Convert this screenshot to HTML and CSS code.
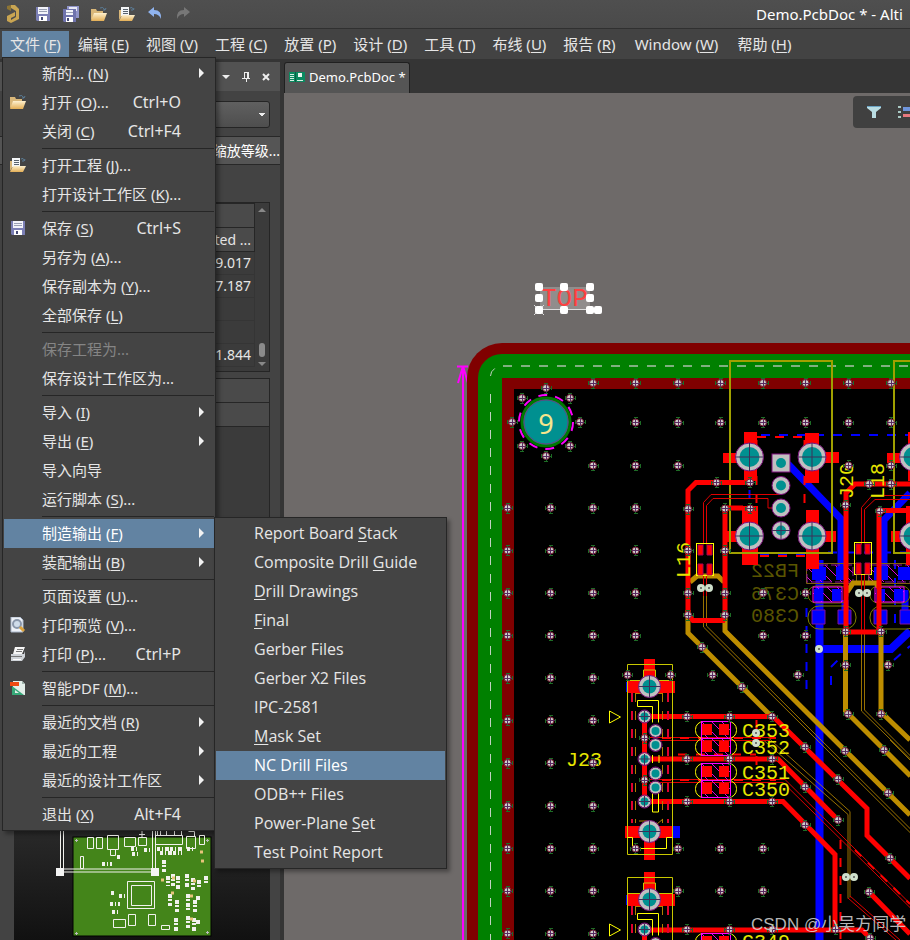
FILE: index.html
```html
<!DOCTYPE html>
<html lang="zh-CN">
<head>
<meta charset="utf-8">
<title>Demo.PcbDoc</title>
<link rel="stylesheet" href="styles.css">
</head>
<body>
<svg class="defs" width="0" height="0" aria-hidden="true">
  <defs>
    <linearGradient id="gold" x1="0" y1="0" x2="0" y2="1"><stop offset="0" stop-color="#fdf0cf"/><stop offset="1" stop-color="#e3ae55"/></linearGradient>
    <symbol id="i-save" viewBox="0 0 16 16">
      <path d="M1 1h14v14H2l-1-1z" fill="#7b7fb5"/><path d="M3 1h10v7H3z" fill="#f2f3fa"/><path d="M4 3.500h8M4 5.500h8" stroke="#9aa0b4"/><path d="M4 10h8v5H4z" fill="#fff"/><path d="M6 11h2v3H6z" fill="#454a78"/>
    </symbol>
    <symbol id="i-saveall" viewBox="0 0 16 16">
      <path d="M4 0h12v12H4z" fill="#9094c8"/><path d="M6 1h8v4H6z" fill="#e8e9f6"/><path d="M0 3h13v13H1l-1-1z" fill="#6f73ad"/><path d="M3 4h7v5H3z" fill="#f2f3fa"/><path d="M3 6.500h7" stroke="#9aa0b4"/><path d="M3 11h7v5H3z" fill="#fff"/><path d="M4 12h2v3H4z" fill="#454a78"/>
    </symbol>
    <symbol id="i-open" viewBox="0 0 16 16">
      <path d="M0 14V3h5l1 2h6v3" fill="#d9b779"/><path d="M3 7h13l-3 8H0z" fill="url(#gold)"/><path d="M9 2q3-2 5 2M12 4l2 0 1-2" fill="none" stroke="#5b7c96"/>
    </symbol>
    <symbol id="i-openproj" viewBox="0 0 16 16">
      <path d="M0 14V4h3v5" fill="#d9b779"/><path d="M2 1h8v9H2z" fill="#f4f6f8"/><path d="M4 3.500h5M4 5.500h5M4 7.500h5" stroke="#59636e"/><path d="M3 9h13l-3 6H0z" fill="url(#gold)"/><path d="M11 2q2-2 4 2M12 4h2l1-2" fill="none" stroke="#5b7c96"/>
    </symbol>
    <symbol id="i-undo" viewBox="0 0 16 16"><path d="M1 6l6-5v3q8 0 7 9-2-5-7-5v3z" fill="#8fb3ee"/></symbol>
    <symbol id="i-redo" viewBox="0 0 16 16"><path d="M15 6L9 1v3Q1 4 2 13q2-5 7-5v3z" fill="#777"/></symbol>
    <symbol id="i-preview" viewBox="0 0 16 16">
      <path d="M1 0h9l3 3v12H1z" fill="#eef2f8" stroke="#a9b6c8"/><circle cx="7" cy="7" r="4" fill="#cfdcea" stroke="#8a97ab" stroke-width="2"/><path d="M10 10l4 4" stroke="#dba23c" stroke-width="3"/>
    </symbol>
    <symbol id="i-print" viewBox="0 0 16 16">
      <path d="M5 1h10l-3 7H3z" fill="#f7f7f7"/><path d="M7 3.500h6M6 5.500h6" stroke="#777"/><path d="M1 8h13l1-3v6l-3 4H1z" fill="#cfd3d8"/><path d="M1 10.500h11" stroke="#777"/><path d="M3 13.500h8" stroke="#fff"/>
    </symbol>
    <symbol id="i-pdf" viewBox="0 0 16 16">
      <path d="M3 1h9l3 3v11H3z" fill="#e3eee9"/><path d="M12 1v3h3" fill="#9fb3ab"/><path d="M0 2h9v4H0z" fill="#ee4a12"/><path d="M2 6l12 9H2z" fill="#36a878"/><path d="M5 10l4 3H5z" fill="#e3eee9"/>
    </symbol>
    <symbol id="i-arrow" viewBox="0 0 6 10"><path d="M0 0l5 5-5 5z" fill="#f2f2f2"/></symbol>
  </defs>
</svg>

<header class="titlebar">
  <svg class="logo" viewBox="0 0 14 20"><path d="M5 1l4 0 4 4v10l-8 4-4-2v-5l8-4v4l-4 2v2l5-3V7L5 4z" fill="#c9a552"/><path d="M5 1v6L1 5V2z" fill="#8d7434"/></svg>
  <button class="tool" aria-label="保存"><svg><use href="#i-save"/></svg></button>
  <button class="tool" aria-label="全部保存"><svg><use href="#i-saveall"/></svg></button>
  <button class="tool" aria-label="打开"><svg><use href="#i-open"/></svg></button>
  <button class="tool" aria-label="打开工程"><svg><use href="#i-openproj"/></svg></button>
  <button class="tool" aria-label="撤销"><svg><use href="#i-undo"/></svg></button>
  <button class="tool" aria-label="重做"><svg><use href="#i-redo"/></svg></button>
  <div class="caption">Demo.PcbDoc * - Alti</div>
</header>

<nav class="menubar">
  <button class="active">文件 (<u>F</u>)</button><button>编辑 (<u>E</u>)</button><button>视图 (<u>V</u>)</button><button>工程 (<u>C</u>)</button><button>放置 (<u>P</u>)</button><button>设计 (<u>D</u>)</button><button>工具 (<u>T</u>)</button><button>布线 (<u>U</u>)</button><button>报告 (<u>R</u>)</button><button class="latin">Window (<u>W</u>)</button><button>帮助 (<u>H</u>)</button>
</nav>

<div class="workspace">
  <aside class="panel">
    <div class="panel-head">
      <button aria-label="菜单"><svg viewBox="0 0 10 10"><path d="M1 3h8L5 7z" fill="#eee"/></svg></button>
      <button aria-label="固定"><svg viewBox="0 0 10 10"><path d="M3.500 0v6M3 .500h5M1 6.500h8M5.500 6v4" fill="none" stroke="#eee"/><path d="M6 0h2v6H6z" fill="#eee"/></svg></button>
      <button aria-label="关闭"><svg viewBox="0 0 10 10"><path d="M2 2l6 6M8 2L2 8" stroke="#eee" stroke-width="2"/></svg></button>
    </div>
    <div class="combo-row"><select class="combo" aria-label="对象"><option></option></select></div>
    <div class="zoom-row"><button>缩放等级...</button></div>
    <div class="grid-box">
      <table class="nets">
        <tr><th></th></tr>
        <tr><th>ted ...</th></tr>
        <tr><td>9.017</td></tr>
        <tr><td>7.187</td></tr>
        <tr><td></td></tr>
        <tr><td></td></tr>
        <tr><td>1.844</td></tr>
      </table>
      <div class="scroll">
        <svg viewBox="0 0 8 5"><path d="M0 5l4-4 4 4z" fill="#888"/></svg>
        <span class="thumb"></span>
        <svg viewBox="0 0 8 5"><path d="M0 0l4 4 4-4z" fill="#888"/></svg>
      </div>
    </div>
    <div class="grid-box second"><div class="bar"></div><div class="bar"></div></div>
    <div class="preview">
      <svg viewBox="14 700 256 240" preserveAspectRatio="xMinYMax slice">
        <rect x="73" y="837" width="138" height="99" fill="#44851a" stroke="#000"/>
        <g fill="none" stroke="#f2f2ee">
          <path d="M87.500 837.500h6v11h-6zM96.500 837.500h6v11h-6zM107.500 835.500h11v14h-11zM124.500 837.500h11v9h-11zM138.500 837.500h8v8h-8zM139 834.500h6M142 831v6M155.500 835.500h27v9h-27zM186.500 836.500h9v12h-9zM199.500 835.500h5v9h-5zM157.500 831v5M160.500 831v5M166.500 831v5M174.500 831v5M181.500 831v5M188.500 831.500h6v5"/>
          <path d="M127.500 881.500h27v27h-27zM131.500 885.500h20v20h-20zM128.500 914.500h7v11h-7zM148.500 914.500h7v11h-7zM113.500 919.500h12v8h-12zM161.500 925.500h8v4h-8zM110.500 849.500h5v6h-5zM80.500 856.500h3v12h-3z"/>
          <path d="M60.500 831v41h95v-41M63.500 831v38h89v-38"/>
        </g>
        <g fill="none" stroke="#f2f2ee" stroke-width="4" stroke-dasharray="3 2 1 2 4 1">
          <path d="M131 849h8M132 854h8M144 850h6M157 849h26M160 853h22M187 849h8M117 857h4M102 864h10M111 893h5M119 896h8M110 904h10M112 912h6"/>
          <path d="M164 860v12M168 876v10M173 874v12M178 876v14M187 874v14M193 878v12M170 894v12M177 900v12M188 894v16M195 900v12M176 918v14M188 916v12M194 918v14M198 920v4M198 896v4M199 880v8M206 876v8" stroke-dasharray="4 1 2 2"/>
        </g>
        <path d="M172 878h3M193 881h3M171 893h3M190 896h3M200 852h3M201 861h3M190 919h3M161 880h3" stroke="#e8c47a" stroke-width="3"/>
        <path d="M56 868h8v8h-8zM151 868h8v8h-8z" fill="#f4f4f4"/>
        <path d="M75 840.500h3M76.500 839v3M206 840.500h3M207.500 839v3M75 933.500h3M76.500 932v3M206 932.500h3M207.500 931v3" stroke="#bbb"/>
      </svg>
    </div>
  </aside>

  <main class="doc">
    <div class="tabs">
      <button class="tab"><svg viewBox="0 0 16 12"><path d="M0 1h16v10H0z" fill="#0b8a60"/><path d="M1 3.500h4M1 5.500h4M1 7.500h4M1 9.500h4M8 9.500h6" stroke="#d6efe4"/><path d="M9 2h4v4H9z" fill="#e9f6f0"/><path d="M6.500 1v10" stroke="#0a5f44"/></svg>Demo.PcbDoc *</button>
    </div>
    <div class="canvas">
      <svg class="board" viewBox="284 93 626 847" preserveAspectRatio="xMinYMin slice">
        <defs>
          <marker id="via" markerUnits="userSpaceOnUse" markerWidth="12" markerHeight="12" refX="6" refY="6" viewBox="0 0 12 12">
            <path d="M1 6h10M6 1v10M4 1h4M4 11h4M1 4v4M11 4v4" stroke="#1d6b25" fill="none" shape-rendering="crispEdges"/>
            <circle cx="6" cy="6" r="3.500" fill="#ccc" stroke="#7a2030"/><path d="M2 6h8M6 2v8" stroke="#5a2a60" shape-rendering="crispEdges"/>
          </marker>
          <marker id="hole" markerUnits="userSpaceOnUse" markerWidth="8" markerHeight="8" refX="4" refY="4" viewBox="0 0 8 8"><circle cx="4" cy="4" r="2.500" fill="#555" stroke="#cfe0cc" stroke-width="3"/></marker>
          <pattern id="hatch" width="10" height="10" patternUnits="userSpaceOnUse"><path d="M0 0l10 10" stroke="#e000e0"/></pattern>
          <g id="mount"><circle r="14" fill="#c0c0c0" stroke="#80107f"/><circle r="10" fill="#009090"/><path d="M-14 0h28M0-14v28" stroke="#3c3058"/></g>
          <g id="mount-s"><circle r="11" fill="#c0c0c0" stroke="#80107f"/><circle r="7" fill="#009090"/><path d="M-11 0h22M0-11v22" stroke="#3c3058"/></g>
          <g id="pin"><circle r="9" fill="#c0c0c0" stroke="#80107f"/><circle r="5" fill="#009090"/></g>
          <g id="pin-s"><circle r="5" fill="#009090" stroke="#c0c0c0" stroke-width="2"/><circle r="6.500" fill="none" stroke="#80107f"/></g>
          <g id="cap"><rect x="695.500" y="721.500" width="41" height="17" rx="8" fill="none" stroke="#ff0"/><rect x="701.500" y="721.500" width="29" height="17" fill="url(#hatch)" stroke="#f0f"/><path d="M702 724h10v11h-10zM719 724h10v11h-10z" fill="#f00"/></g>
          <g id="conn">
            <path d="M644 659h11v24h-11zM628 681h47v12h-47zM625 826h48v12h-48zM644 836h11v24h-11z" fill="#f00"/>
            <path d="M673 826h7v12h-7zM626 682h2v10h-2z" fill="#00f"/>
            <path d="M632 693v130M668 693v130" stroke="#e00030" stroke-width="2" stroke-dasharray="9 9"/>
            <path d="M635.500 693v130M662.500 693v130M639 821h8M657 824l6-5" stroke="#b08000" stroke-dasharray="9 9"/>
            <path d="M635 693.500h28" stroke="#b08000"/>
            <path d="M644.500 716v86" stroke="#f00" stroke-width="5"/>
            <g fill="none" stroke="#c8c800"><path d="M627.500 664.500h45v190h-45zM643.500 681v-11h12v11M627.500 680.500h45"/><path d="M637.500 700.500h21v22M637.500 700.500v6h15v16M652.500 755v8M659 755v8M652.500 793v19h6v-19M627.500 837.500h5v11h34v-11h6" stroke="#ff0"/></g>
            <use href="#mount-s" x="649.500" y="686.500"/><use href="#mount-s" x="649.500" y="831.500"/>
            <use href="#pin-s" x="644.500" y="716.500"/><use href="#pin-s" x="655.500" y="731"/><use href="#pin-s" x="655.500" y="745"/><use href="#pin-s" x="644.500" y="759"/><use href="#pin-s" x="655.500" y="773.500"/><use href="#pin-s" x="655.500" y="787.500"/><use href="#pin-s" x="644.500" y="801.500"/>
            <path d="M639 716.500h11M644.500 711v11M639 759h11M644.500 754v11M639 801.500h11M644.500 796v11" stroke="#3c3058"/>
            <path d="M609.500 711v12l11-6z" fill="none" stroke="#ff0"/>
          </g>
          <g id="usb">
            <path d="M744 432h13v49h-13zM723 453h18v10h-18zM805 433h14v50h-14zM820 452h19v11h-19zM742 506h16v59h-16zM727 531h12v11h-12zM806 510h13v59h-13zM820 531h16v11h-16z" fill="#f00"/>
            <path d="M757 437h48M756.500 440v65M804.500 440v70M760 556h45" stroke="#f00" stroke-width="2" stroke-dasharray="9 9" fill="none"/>
            <path d="M730 361h102v192h-102z" fill="none" stroke="#a0a000" stroke-width="2"/>
            <use href="#mount" x="749.500" y="457"/><use href="#mount" x="812" y="457"/><use href="#mount" x="749.500" y="536"/><use href="#mount" x="812" y="536"/>
          </g>
          <g id="choke"><rect x="696.500" y="543.500" width="17" height="32" fill="none" stroke="#ff0"/><path d="M698 545h5v10h-5zM707 545h5v10h-5zM698 564h5v11h-5zM707 564h5v11h-5z" fill="#f00" stroke="#b00050"/></g>
          <g id="smd">
            <path d="M806.500 563.500h50v20h-50z" fill="none" stroke="#806010"/><path d="M807 565h46v17h-46z" fill="url(#hatch)" stroke="#90109a" stroke-dasharray="9 3"/>
            <path d="M812 567h14v13h-14zM836 567h12v13h-12z" fill="#00f"/>
            <rect x="808" y="586" width="40" height="17" rx="8" fill="none" stroke="#707000"/><path d="M813 587h29v15h-29z" fill="url(#hatch)" stroke="#f0f"/><path d="M814 589h9v12h-9zM832 589h9v12h-9z" fill="#00f"/>
            <rect x="808" y="606" width="48" height="23" rx="11" fill="none" stroke="#808000"/><path d="M812 610h13v14h-13zM838 610h13v14h-13z" fill="#00f" stroke="#80109f"/>
          </g>
        </defs>

        <path d="M463 367v573M457 366.500h11M463 366l-5 17M463 366l5 17" stroke="#f0f" stroke-width="2" fill="none"/>
        <path d="M467 940V378a35 35 0 0 1 35-35h408v597z" fill="#800000"/>
        <path d="M478 940V378a24 24 0 0 1 24-24h408v24H502v562z" fill="#008000"/>
        <path d="M514 389h396v551H514z" fill="#000"/>
        <path d="M503 366h407" stroke="#80b080" stroke-width="2" stroke-dasharray="9 9"/>
        <path d="M490.500 394v546M490.500 376q0-5 5-8" stroke="#c0d0c0" fill="none" stroke-dasharray="9 9"/>

        <g class="silk dim">
          <text transform="translate(799 577) scale(-1 1)">FB22</text>
          <text transform="translate(799 600) scale(-1 1)">C376</text>
          <text transform="translate(799 622) scale(-1 1)">C380</text>
        </g>

        <g fill="none" stroke="#00f">
          <path d="M819.500 560v380" stroke-width="8"/>
          <path d="M820 649h71l19-18" stroke-width="8"/>
          <path d="M788 464l53 55v50M910 493l-26 27v50M845 600v15M905 590v30" stroke-width="7"/>
          <path d="M761 435h149M749.500 490v16M760 555h50M828 552.500h82M806.500 608v82M831 685v-18l8-8M895 560v70M894 660l16-14" stroke-width="2" stroke-dasharray="9 9"/>
        </g>
        <use href="#smd"/><use href="#smd" x="62"/>

        <g fill="none" stroke="#bd8d00">
          <path d="M688 610v23l84 84M725 615v16l185 184M845.500 630v81l65 65M881 630v82l29 28M690 582l7-6h21l6 6M847 592l6-9h23l4 6" stroke-width="5"/>
          <path d="M703.500 580v47l207 206M706.500 580v46l204 203M861.500 590v121l49 48M864.500 590v120l46 46M660 737.500h108l82 74v86M664 740.500h100l84 74v84M890 740l20 20" stroke-width="1" opacity=".8"/>
        </g>

        <use href="#usb"/><use href="#usb" x="164"/>
        <rect x="772" y="454" width="18" height="18" fill="#c0c0c0" stroke="#80107f"/><circle cx="781" cy="463" r="5" fill="#009090"/>

        <g fill="none" stroke="#f00">
          <path d="M750 482.500h-54l-8 8v124l5 6h30l2-6V508h18M910 484h-55l-9 9v139h34M910 510.500h-31V632" stroke-width="5"/>
          <path d="M644 716.500h129l94 92v27l43 43M644 759h134l60 61M644 801.500h139l52 53v76M644 930h218l10 10M869 892l41 42" stroke-width="5"/>
          <path d="M780 494.500h-69l-7.500 8v42M776 508h-8v-9.500h-55l-6.500 7v39M910 495.500h-38l-10.500 12v37M910 499.500h-35l-10.500 10v34M861.500 575v55M864.500 575v55M703.500 576v20M706.500 576v20" stroke="#d00"/>
          <path d="M650 737.500h126M650 740.500h120M650 779.500h135l125 124M650 782.500h133l127 125M848 898l48 42M850 896l50 44" stroke="#d00"/>
          <path d="M662 738h114M662 780h114M678 754.500h78M756.500 720v48M840.500 840v100M855 850l55 54" stroke-width="2" stroke-dasharray="9 9"/>
        </g>
        <use href="#pin" x="781" y="485.500"/><use href="#pin" x="781" y="508"/><use href="#pin" x="781" y="530.500"/><path d="M772 530.500h18M781 521v19" stroke="#3c3058"/>
        <use href="#choke"/><use href="#choke" x="158" y="-1"/>
        <use href="#conn"/><use href="#conn" y="213"/>
        <use href="#cap"/><use href="#cap" y="17"/><use href="#cap" y="42"/><use href="#cap" y="59"/><use href="#cap" y="212"/>

        <g class="silk">
          <text x="566" y="766">J23</text>
          <text x="742" y="737">C353</text><text x="742" y="754">C352</text><text x="742" y="779">C351</text><text x="742" y="796">C350</text><text x="742" y="948">C349</text>
          <text transform="translate(690 578) rotate(-90)">L16</text><text transform="translate(853 499) rotate(-90)">J20</text><text transform="translate(884 499) rotate(-90)">L18</text>
        </g>

        <polyline class="vias" points="593,383 635.500,383 678,383 720.500,383 763,383 805.500,383 848.500,383 891,383 635.500,422.500 678,422.500 720.500,422.500 763,422.500 805.500,422.500 848.500,422.500 891,422.500 593,465.500 635.500,465.500 678,465.500 848.500,465.500 891,465.500"/>
        <polyline class="vias" points="507.500,508 550.500,508 593,508 635.500,508 507.500,550.500 550.500,550.500 593,550.500 635.500,550.500 507.500,593 550.500,593 593,593 635.500,593 507.500,635.500 550.500,635.500 593,635.500 635.500,635.500 507.500,678 550.500,678 593,678 507.500,720.500 550.500,720.500 593,720.500 507.500,763 550.500,763 593,763 507.500,806 550.500,806 593,806 507.500,848.500 550.500,848.500 593,848.500 507.500,891 550.500,891 593,891 507.500,933.500 550.500,933.500 593,933.500"/>
        <polyline class="vias" points="635.500,848.500 678,848.500 720.500,848.500 763,848.500 678,891 720.500,891 763,891 627.500,675 670.500,675 712.500,675 798,675 763,593 805.500,593 763,635.500 805.500,635.500 688,550.500 725,550.500 688,593 725,593 688,615 725,615 702,647 742,687 888,665 845.500,665 845.500,631.500 881,631.500 848,714 881,714"/>
        <polyline class="vias" points="716.500,482.500 750,482.500 688,509 725,508.500 750,508.500 869,484 891,484 845.500,505 880,511 845,751 884,750 888,793 805,747 838,779 805,787 838,820 805,825 890,858 869,892 870,938 687,716.500 729.500,716.500 772,716.500 687,759 729.500,759 772,759 687,801.500 729.500,801.500 772,801.500 687,929.500 729.500,929.500 772,929.500 835.500,929.500 644.500,738 644.500,780"/>
        <polyline class="vias" points="546,388 522,398 570,398 512,422 580,422 522,446 570,446 546,456"/>
        <polyline class="holes" points="701,588 709,588 859,593 867,593 819,649 756,733 756,743 846,877 854,877"/>

        <circle cx="546" cy="422" r="27" fill="none" stroke="#f0f" stroke-width="2" stroke-dasharray="9 8"/>
        <circle cx="546" cy="422" r="24" fill="#009090" stroke="#007800" stroke-width="3"/><circle cx="546" cy="422" r="22" fill="none" stroke="#6a4080"/>
        <text class="padno" x="546" y="434">9</text>

        <rect x="540" y="287" width="50" height="23" fill="#918d8c"/><path d="M540 309.500h50M534 305l10 10M534 315l10-10" stroke="#ddd"/>
        <text class="top" x="541" y="306">TOP</text>
        <g fill="#fff"><rect x="535" y="283" width="8" height="8" rx="2"/><rect x="560" y="283" width="8" height="8" rx="2"/><rect x="586" y="283" width="8" height="8" rx="2"/><rect x="535" y="294" width="8" height="8" rx="2"/><rect x="586" y="294" width="8" height="8" rx="2"/><rect x="535" y="306" width="8" height="8" rx="2"/><rect x="560" y="306" width="8" height="8" rx="2"/><rect x="586" y="306" width="8" height="8" rx="2"/><rect x="594" y="306" width="8" height="8" rx="2"/></g>
        <text class="mark" x="751" y="930">CSDN @小吴方同学</text>
      </svg>
      <div class="filterbar">
        <button aria-label="过滤器"><svg viewBox="0 0 14 12"><path d="M0 0h14v2L9 6v6H5V6L0 2z" fill="#b9dce2"/><path d="M0 .500h14" stroke="#6aa3c4"/></svg></button>
        <button aria-label="捕捉"><svg viewBox="0 0 14 12"><path d="M0 1h3M0 6h3M0 11h3" stroke="#a9c9c4" stroke-width="2"/><path d="M5 1h9v4H5z" fill="#6f95dc"/><path d="M5 8h9v3H5z" fill="#e87a80"/></svg></button>
      </div>
    </div>
  </main>
</div>

<div class="menu file-menu" role="menu">
  <button><i></i><span>新的... (<u>N</u>)</span><kbd></kbd><svg class="sub"><use href="#i-arrow"/></svg></button>
  <button><i><svg><use href="#i-open"/></svg></i><span>打开 (<u>O</u>)...</span><kbd>Ctrl+O</kbd><b></b></button>
  <button><i></i><span>关闭 (<u>C</u>)</span><kbd>Ctrl+F4</kbd><b></b></button>
  <hr>
  <button><i><svg><use href="#i-openproj"/></svg></i><span>打开工程 (<u>J</u>)...</span></button>
  <button><i></i><span>打开设计工作区 (<u>K</u>)...</span></button>
  <hr>
  <button><i><svg><use href="#i-save"/></svg></i><span>保存 (<u>S</u>)</span><kbd>Ctrl+S</kbd><b></b></button>
  <button><i></i><span>另存为 (<u>A</u>)...</span></button>
  <button><i></i><span>保存副本为 (<u>Y</u>)...</span></button>
  <button><i></i><span>全部保存 (<u>L</u>)</span></button>
  <hr>
  <button disabled><i></i><span>保存工程为...</span></button>
  <button><i></i><span>保存设计工作区为...</span></button>
  <hr>
  <button><i></i><span>导入 (<u>I</u>)</span><kbd></kbd><svg class="sub"><use href="#i-arrow"/></svg></button>
  <button><i></i><span>导出 (<u>E</u>)</span><kbd></kbd><svg class="sub"><use href="#i-arrow"/></svg></button>
  <button><i></i><span>导入向导</span></button>
  <button><i></i><span>运行脚本 (<u>S</u>)...</span></button>
  <hr>
  <button class="hot"><i></i><span>制造输出 (<u>F</u>)</span><kbd></kbd><svg class="sub"><use href="#i-arrow"/></svg></button>
  <button><i></i><span>装配输出 (<u>B</u>)</span><kbd></kbd><svg class="sub"><use href="#i-arrow"/></svg></button>
  <hr>
  <button><i></i><span>页面设置 (<u>U</u>)...</span></button>
  <button><i><svg><use href="#i-preview"/></svg></i><span>打印预览 (<u>V</u>)...</span></button>
  <button><i><svg><use href="#i-print"/></svg></i><span>打印 (<u>P</u>)...</span><kbd>Ctrl+P</kbd><b></b></button>
  <hr>
  <button><i><svg><use href="#i-pdf"/></svg></i><span>智能PDF (<u>M</u>)...</span></button>
  <hr>
  <button><i></i><span>最近的文档 (<u>R</u>)</span><kbd></kbd><svg class="sub"><use href="#i-arrow"/></svg></button>
  <button><i></i><span>最近的工程</span><kbd></kbd><svg class="sub"><use href="#i-arrow"/></svg></button>
  <button><i></i><span>最近的设计工作区</span><kbd></kbd><svg class="sub"><use href="#i-arrow"/></svg></button>
  <hr>
  <button><i></i><span>退出 (<u>X</u>)</span><kbd>Alt+F4</kbd><b></b></button>
</div>

<div class="menu sub-menu" role="menu">
  <button><i></i><span>Report Board <u>S</u>tack</span></button>
  <button><i></i><span>Composite Drill <u>G</u>uide</span></button>
  <button><i></i><span><u>D</u>rill Drawings</span></button>
  <button><i></i><span><u>F</u>inal</span></button>
  <button><i></i><span>Gerber Files</span></button>
  <button><i></i><span>Gerber X2 Files</span></button>
  <button><i></i><span>IPC-2581</span></button>
  <button><i></i><span><u>M</u>ask Set</span></button>
  <button class="hot"><i></i><span>NC Drill Files</span></button>
  <button><i></i><span>ODB++ Files</span></button>
  <button><i></i><span>Power-Plane <u>S</u>et</span></button>
  <button><i></i><span>Test Point Report</span></button>
</div>
</body>
</html>
```
FILE: styles.css
```css
* { box-sizing: border-box; }
body {
  margin: 0; height: 100vh; display: flex; flex-direction: column; overflow: hidden;
  background: #353535; color: #e6e6e6;
  font: 15px/20px "Noto Sans", "Noto Sans CJK SC", sans-serif;
}
button { margin: 0; padding: 0; border: 0; background: none; color: inherit; font: inherit; white-space: nowrap; }
svg { display: block; }
.defs { position: absolute; }
u { text-underline-offset: 2px; text-decoration-thickness: 1px; }

.titlebar { flex: none; height: 29px; display: flex; align-items: center; gap: 12px; padding-left: 6px; background: linear-gradient(#4f4f4f, #4a4a4a); border-bottom: 1px solid #303030; }
.logo { width: 14px; height: 20px; margin-right: 3px; }
.tool svg { width: 16px; height: 16px; }
.caption { flex: none; width: 154px; margin-left: auto; overflow: hidden; white-space: nowrap; color: #fff; }

.menubar { flex: none; height: 30px; display: flex; gap: 1px; padding: 2px 0 2px 2px; background: #434343; }
.menubar button { padding: 0 8px; }
.menubar .active { background: #6283a2; }
.menubar .latin { padding: 0 10px; }

.workspace { flex: 1; min-height: 0; display: flex; gap: 4px; }
.panel { flex: none; width: 280px; margin-top: 3px; display: flex; flex-direction: column; background: #434343; }
.panel-head { height: 29px; display: flex; justify-content: flex-end; align-items: center; gap: 10px; padding-right: 9px; background: #525252; }
.panel-head svg { width: 10px; height: 10px; }
.combo-row { padding: 10px 10px 8px 14px; }
.combo {
  display: block; width: 100%; height: 27px; border: 1px solid #252525; border-radius: 3px; appearance: none;
  background:
    linear-gradient(to bottom right, #eee 50%, transparent 50%) right 3px center / 4px 4px no-repeat,
    linear-gradient(to bottom left, #eee 50%, transparent 50%) right 7px center / 4px 4px no-repeat,
    linear-gradient(#606060, #4e4e4e);
}
.zoom-row { height: 29px; display: flex; justify-content: flex-end; background: #555; border: solid #282828; border-width: 1px 0; overflow: hidden; font-size: 14px; color: #fff; }
.grid-box { margin: 37px 10px 0 14px; height: 170px; display: flex; border: 1px solid #252525; background: #3b3b3b; }
.nets { flex: 1; align-self: flex-start; border-collapse: collapse; font-size: 14px; line-height: 18px; text-align: right; }
.nets th, .nets td { height: 23px; padding: 0 3px; border: 1px solid #353535; border-left: 0; font-weight: 400; }
.nets th { height: 24px; background: #4a4a4a; border-color: #262626; }
.scroll { width: 14px; display: flex; flex-direction: column; align-items: center; padding: 4px 0; }
.scroll svg { width: 8px; height: 5px; }
.thumb { width: 6px; height: 14px; margin: auto 0 5px; border-radius: 3px; background: #8b8b8b; }
.grid-box.second { margin-top: 6px; height: auto; flex: 1; flex-direction: column; }
.bar { height: 24px; background: #4a4a4a; border-bottom: 1px solid #262626; }
.preview { flex: 0 0 240px; margin: 0 10px 0 14px; background: linear-gradient(#454545, #111); }
.preview svg { width: 100%; height: 100%; }

.doc { flex: 1; min-width: 0; display: flex; flex-direction: column; }
.tabs { flex: none; height: 34px; display: flex; align-items: flex-end; }
.tab { height: 31px; padding: 0 3px 2px 4px; display: flex; align-items: center; gap: 4px; background: #555; border: 1px solid #202020; border-bottom: 0; border-radius: 3px 3px 0 0; font-size: 13px; color: #fff; }
.tab svg { width: 16px; height: 12px; }
.canvas { position: relative; flex: 1; min-height: 0; background: #6e6a69; overflow: hidden; }
.board { width: 100%; height: 100%; }
.vias { fill: none; marker: url(#via); }
.holes { fill: none; marker: url(#hole); }
.silk { fill: #e6e600; font: 20px "Liberation Mono", monospace; }
.dim { fill: #5a5500; }
.padno { fill: #f5e58c; font: 27px "Noto Sans", sans-serif; text-anchor: middle; }
.top { fill: #ff4040; font: 26px "Liberation Mono", monospace; }
.mark { fill: #d8d8d8; fill-opacity: .85; font: 17px "Liberation Sans", "Noto Sans CJK SC", sans-serif; }
.filterbar { position: absolute; top: 3px; right: 0; width: 57px; height: 32px; display: flex; align-items: center; gap: 17px; padding-left: 14px; overflow: hidden; background: #404040; border-radius: 4px 0 0 4px; }
.filterbar svg { width: 14px; height: 12px; }

.menu { position: absolute; padding: 1px; background: #444; border: 1px solid #262626; box-shadow: 3px 3px 4px rgba(0, 0, 0, .35); }
.file-menu { left: 2px; top: 57px; width: 214px; }
.sub-menu { left: 214px; top: 517px; width: 233px; font-family: "Open Sans", sans-serif; font-size: 16px; }
.menu button { width: 100%; height: 29px; padding-bottom: 2px; display: flex; align-items: center; text-align: left; }
.menu i { flex: none; width: 38px; padding-left: 6px; }
.menu i svg { width: 16px; height: 16px; }
.menu span { flex: 1; }
.menu kbd { font: inherit; font-size: 16px; }
.menu b { width: 33px; }
.menu .sub { width: 6px; height: 10px; margin-right: 9px; }
.menu hr { height: 1px; margin: 2px 0 2px 38px; border: 0; background: #262626; }
.menu .hot { background: #6283a2; color: #fff; }
.menu button:disabled { color: #858585; }
```
